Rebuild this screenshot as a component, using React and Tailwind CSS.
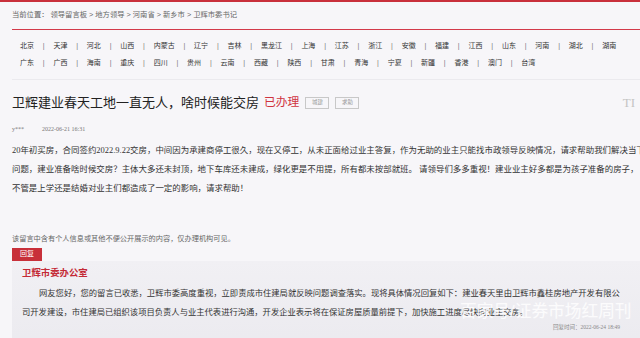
const provincesA = ['北京', '天津', '河北', '山西', '内蒙古', '辽宁', '吉林', '黑龙江', '上海', '江苏', '浙江', '安徽', '福建', '江西', '山东', '河南', '湖北', '湖南'];
const provincesB = ['广东', '广西', '海南', '重庆', '四川', '贵州', '云南', '西藏', '陕西', '甘肃', '青海', '宁夏', '新疆', '香港', '澳门', '台湾'];

const sans = { fontFamily: '"Liberation Sans", "Noto Sans CJK SC", sans-serif' };

function ProvinceRow({ items }) {
  return (
    <div className="flex items-center whitespace-nowrap leading-[17px] text-[7px] text-[#333]">
      {items.map((p, i) => (
        <span key={p} className="flex items-center">
          {i > 0 && <span className="mx-[8.8px] text-[#777]">|</span>}
          <span>{p}</span>
        </span>
      ))}
    </div>
  );
}

export default function App() {
  return (
    <div
      className="relative w-full h-[338px] overflow-hidden bg-[#f7f6f9]"
      style={{ fontFamily: '"Liberation Serif", "Noto Sans CJK SC", serif' }}
    >
      {/* top bar */}
      <div className="h-[2px] bg-[#c9303c]" />

      {/* breadcrumb */}
      <div className="h-[27px] flex items-center pl-3 text-[7.3px] text-[#666] whitespace-nowrap" style={sans}>
        当前位置： 领导留言板 &gt; 地方领导 &gt; 河南省 &gt; 新乡市 &gt; 卫辉市委书记
      </div>
      <div className="ml-3 h-px bg-[#d33a4a]" />

      {/* provinces */}
      <div className="pl-5 pt-[6.5px] pb-[8px]" style={sans}>
        <ProvinceRow items={provincesA} />
        <ProvinceRow items={provincesB} />
      </div>
      <div className="ml-3 h-px bg-[#ebeaee]" />

      {/* title */}
      <div className="mt-[13px] h-[20px] flex items-center pl-3 whitespace-nowrap" style={sans}>
        <h1 className="text-[13px] text-[#222]">卫辉建业春天工地一直无人，啥时候能交房</h1>
        <span className="ml-[5px] text-[11.8px] text-[#d0343f]">已办理</span>
        <span className="ml-[6px] w-[24px] h-[12px] border border-[#c8c8c8] flex items-center justify-center text-[5.5px] text-[#999]">城建</span>
        <span className="ml-[6px] w-[24px] h-[12px] border border-[#c8c8c8] flex items-center justify-center text-[5.5px] text-[#999]">求助</span>
        <span className="ml-auto mr-[5px] text-[13px] text-[#c4c4c4]" style={{ fontFamily: '"Liberation Serif", serif' }}>TI</span>
      </div>

      {/* author */}
      <div className="mt-[12px] h-[10px] flex items-center pl-3 text-[6px] text-[#777] whitespace-nowrap">
        <span>y***</span>
        <span className="ml-[18px]">2022-06-21 16:31</span>
      </div>

      {/* body */}
      <p className="mt-[6.5px] pl-3 text-[8.45px] leading-[19px] text-[#333] whitespace-nowrap">
        20年初买房，合同签约2022.9.22交房，中间因为承建商停工很久，现在又停工，从未正面给过业主答复，作为无助的业主只能找市政领导反映情况，请求帮助我们解决当下
        <br />
        问题，建业准备啥时候交房？主体大多还未封顶，地下车库还未建成，绿化更是不用提，所有都未按部就班。 请领导们多多重视！建业业主好多都是为孩子准备的房子，
        <br />
        不管是上学还是结婚对业主们都造成了一定的影响，请求帮助！
      </p>

      {/* notice */}
      <div className="mt-[34.5px] pl-3 leading-[12px] text-[7.2px] text-[#666] whitespace-nowrap" style={sans}>
        该留言中含有个人信息或其他不便公开展示的内容，仅办理机构可见。
      </div>

      {/* reply */}
      <div className="mt-[3px] ml-3">
        <div className="w-[30px] h-[13px] bg-[#c8303a] flex items-center justify-center text-[7px] text-white" style={sans}>
          回复
        </div>
        <div className="bg-gradient-to-b from-[#f1f0f4] to-[#ebeaef] pl-[10px] pr-5 pt-[5px] h-[90px]">
          <div className="leading-[14px] text-[9.4px] font-bold text-[#c42a36]" style={sans}>卫辉市委办公室</div>
          <p className="mt-[5.5px] text-[8.3px] leading-[18.5px] text-[#333] whitespace-nowrap">
            <span className="pl-[17px]">网友您好，您的留言已收悉，卫辉市委高度重视，立即责成市住建局就反映问题调查落实。现将具体情况回复如下：建业春天里由卫辉市鑫桂房地产开发有限公</span>
            <br />
            司开发建设，市住建局已组织该项目负责人与业主代表进行沟通，开发企业表示将在保证房屋质量前提下，加快施工进度尽快向业主交房。
          </p>
          <div className="text-right leading-[10px] text-[5.5px] text-[#888] whitespace-nowrap">
            回复时间：2022-06-24 18:49
          </div>
        </div>
      </div>

      {/* watermark */}
      <div
        className="absolute left-[460px] top-[300px] text-[16.7px] leading-[24px] text-white/80 whitespace-nowrap"
        style={sans}
      >
        百家号/证券市场红周刊
      </div>
    </div>
  );
}
